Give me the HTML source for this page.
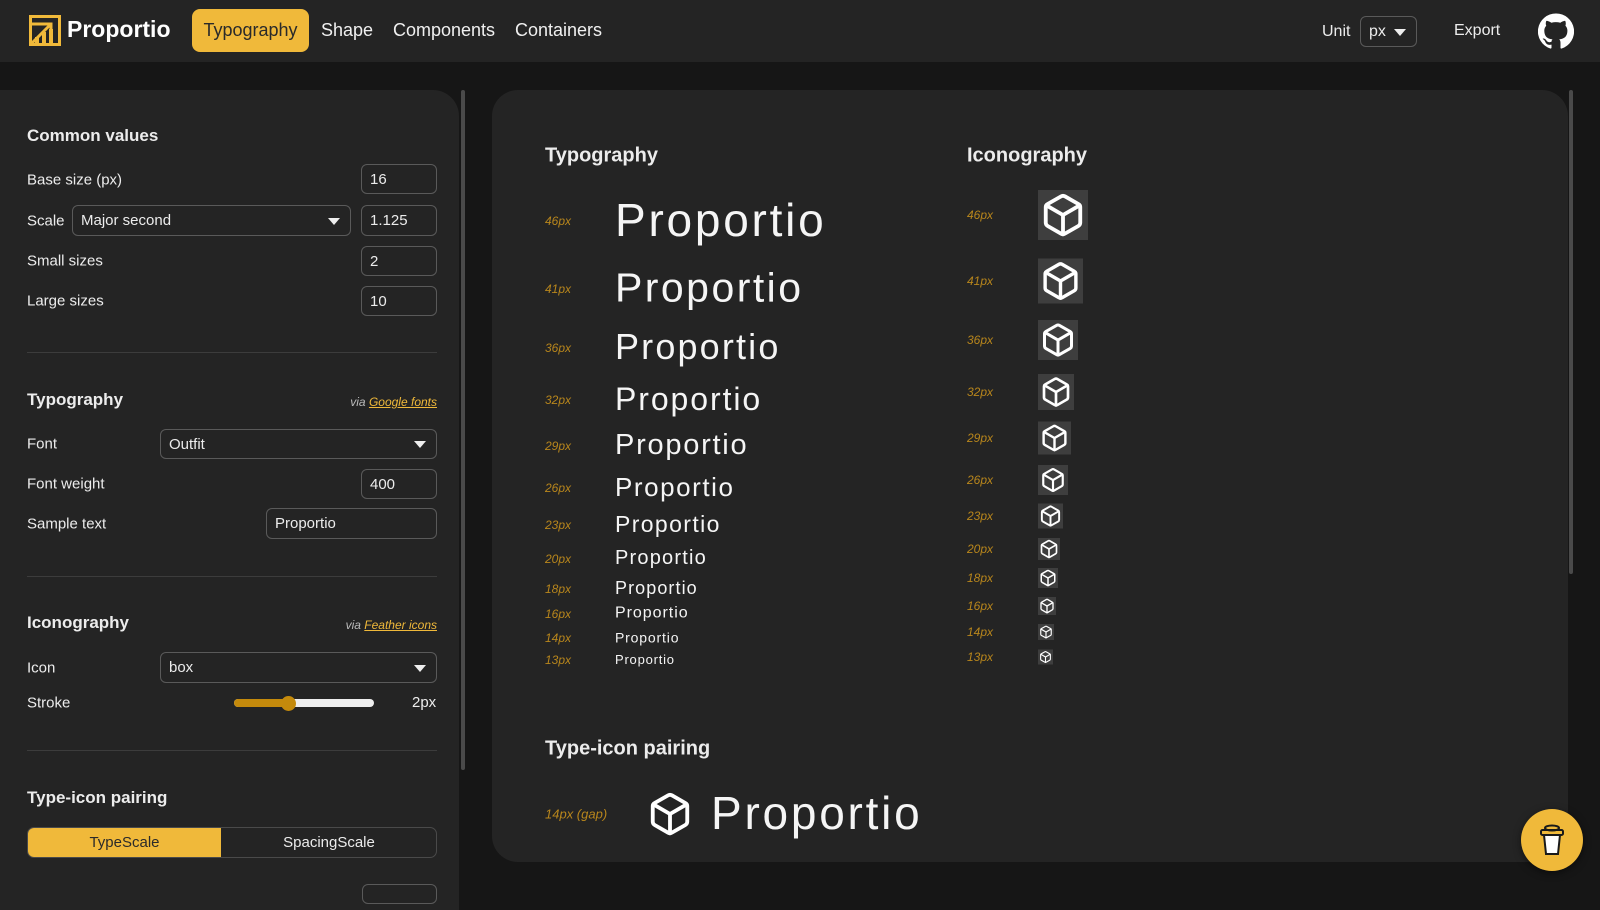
<!DOCTYPE html><html><head><meta charset="utf-8"><style>
*{box-sizing:border-box;margin:0;padding:0}
body{width:1600px;height:889px;overflow:hidden;background:#161616;font-family:"Liberation Sans",sans-serif;color:#ececec;position:relative}
.a{position:absolute;white-space:nowrap}
.hdr{left:0;top:0;width:1600px;height:62px;background:#242424}
.nav{font-size:18px;top:20px;color:#f0f0f0}
.side{left:0;top:90px;width:459px;height:820px;background:#242424;border-top-right-radius:26px}
.main{left:492px;top:90px;width:1076px;height:772px;background:#242424;border-radius:26px}
.lbl{font-size:15px;left:27px;transform:translateY(-50%)}
.h{font-size:17px;font-weight:bold;transform:translateY(-50%)}
.inp{border:1px solid #5a5a5a;border-radius:6px;font-size:15px;padding-left:8px;display:flex;align-items:center}
.dd::after{content:"";position:absolute;right:10px;top:50%;margin-top:-3px;border-left:6px solid transparent;border-right:6px solid transparent;border-top:7px solid #eee}
.div{left:27px;width:410px;height:1px;background:#3c3c3c}
.via{font-size:12px;font-style:italic;color:#bbb;right:1163px;transform:translateY(-50%)}
.via u{color:#f0b93a}
.sz{font-size:12px;font-style:italic;color:#b8861c;transform:translateY(-50%)}
.pt{left:615px;letter-spacing:.06em;transform:translateY(-52%);color:#f5f5f5}
.ic{left:1038px;background:#3e3e3e;transform:translateY(-50%);display:flex;align-items:center;justify-content:center}
</style></head><body>
<div class="a hdr"></div>
<svg class="a" style="left:29px;top:15px" width="32" height="31" viewBox="0 0 32 31"><rect x="1.5" y="1.5" width="29" height="28" fill="none" stroke="#f0b93a" stroke-width="3"/><path d="M1 9H22V17M3 28L22 9" stroke="#f0b93a" stroke-width="3" fill="none"/><rect x="6" y="22" width="4" height="7" fill="#f0b93a"/><rect x="13" y="17" width="4" height="12" fill="#f0b93a"/><rect x="20" y="14" width="4" height="15" fill="#f0b93a"/></svg>
<div class="a" style="left:67px;top:16px;font-size:23px;font-weight:bold;color:#fff">Proportio</div>
<div class="a" style="left:192px;top:9px;width:117px;height:43px;background:#f0b93a;border-radius:8px;color:#2a2a2a;font-size:18px;display:flex;align-items:center;justify-content:center">Typography</div>
<div class="a nav" style="left:321px">Shape</div>
<div class="a nav" style="left:393px">Components</div>
<div class="a nav" style="left:515px">Containers</div>
<div class="a" style="left:1322px;top:23px;font-size:16px">Unit</div>
<div class="a inp dd" style="left:1360px;top:16px;width:57px;height:31px;font-size:16px">px</div>
<div class="a" style="left:1454px;top:22px;font-size:16px">Export</div>
<svg class="a" style="left:1538px;top:13px" width="36" height="36" viewBox="0 0 24 24"><path fill="#fff" d="M12 .3a12 12 0 0 0-3.8 23.4c.6.1.8-.3.8-.6v-2c-3.3.7-4-1.6-4-1.6-.6-1.4-1.4-1.8-1.4-1.8-1-.7.1-.7.1-.7 1.2.1 1.8 1.2 1.8 1.2 1 1.8 2.8 1.3 3.5 1 0-.8.4-1.3.7-1.6-2.7-.3-5.5-1.3-5.5-6 0-1.2.5-2.3 1.3-3.1-.2-.4-.6-1.6 0-3.2 0 0 1-.3 3.4 1.2a11.5 11.5 0 0 1 6 0c2.3-1.5 3.3-1.2 3.3-1.2.6 1.6.2 2.8.1 3.2.8.8 1.3 1.9 1.3 3.2 0 4.6-2.8 5.6-5.5 5.9.5.4.9 1.1.9 2.2v3.3c0 .3.1.7.8.6A12 12 0 0 0 12 .3"/></svg>

<div class="a side"></div>
<div class="a" style="left:461px;top:90px;width:4px;height:680px;background:#4a4a4a;border-radius:2px"></div>
<div class="a h" style="left:27px;top:136px">Common values</div>
<div class="a lbl" style="top:180px">Base size (px)</div>
<div class="a inp" style="left:361px;top:164px;width:76px;height:30px">16</div>
<div class="a lbl" style="top:221px">Scale</div>
<div class="a inp dd" style="left:72px;top:205px;width:279px;height:31px">Major second</div>
<div class="a inp" style="left:361px;top:205px;width:76px;height:31px">1.125</div>
<div class="a lbl" style="top:261px">Small sizes</div>
<div class="a inp" style="left:361px;top:246px;width:76px;height:30px">2</div>
<div class="a lbl" style="top:301px">Large sizes</div>
<div class="a inp" style="left:361px;top:286px;width:76px;height:30px">10</div>
<div class="a div" style="top:352px"></div>
<div class="a h" style="left:27px;top:400px">Typography</div>
<div class="a via" style="top:402px">via <u>Google fonts</u></div>
<div class="a lbl" style="top:444px">Font</div>
<div class="a inp dd" style="left:160px;top:429px;width:277px;height:30px">Outfit</div>
<div class="a lbl" style="top:484px">Font weight</div>
<div class="a inp" style="left:361px;top:469px;width:76px;height:30px">400</div>
<div class="a lbl" style="top:524px">Sample text</div>
<div class="a inp" style="left:266px;top:508px;width:171px;height:31px">Proportio</div>
<div class="a div" style="top:576px"></div>
<div class="a h" style="left:27px;top:623px">Iconography</div>
<div class="a via" style="top:625px">via <u>Feather icons</u></div>
<div class="a lbl" style="top:668px">Icon</div>
<div class="a inp dd" style="left:160px;top:652px;width:277px;height:31px">box</div>
<div class="a lbl" style="top:703px">Stroke</div>
<div class="a" style="left:234px;top:699px;width:140px;height:8px;border-radius:4px;background:#eee"></div>
<div class="a" style="left:234px;top:699px;width:56px;height:8px;border-radius:4px;background:#c48a0c"></div>
<div class="a" style="left:281px;top:696px;width:15px;height:15px;border-radius:50%;background:#c48a0c"></div>
<div class="a" style="left:412px;top:694px;font-size:15px">2px</div>
<div class="a div" style="top:750px"></div>
<div class="a h" style="left:27px;top:798px">Type-icon pairing</div>
<div class="a" style="left:27px;top:827px;width:410px;height:31px;border:1px solid #4a4a4a;border-radius:7px;overflow:hidden;font-size:15px">
<div class="a" style="left:0;top:0;width:193px;height:29px;background:#f0b93a;color:#2a2a2a;display:flex;align-items:center;justify-content:center">TypeScale</div>
<div class="a" style="left:193px;top:0;width:216px;height:29px;display:flex;align-items:center;justify-content:center">SpacingScale</div></div>
<div class="a" style="left:362px;top:884px;width:75px;height:20px;border:1px solid #5a5a5a;border-radius:6px"></div>

<div class="a main"></div>
<div class="a" style="left:1569px;top:90px;width:4px;height:484px;background:#4a4a4a;border-radius:2px"></div>
<div class="a h" style="left:545px;top:156px;font-size:20px">Typography</div>
<div class="a h" style="left:967px;top:156px;font-size:20px">Iconography</div>

<svg width="0" height="0" style="position:absolute"><defs><g id="bx" fill="none" stroke="#fff" stroke-width="2" stroke-linecap="round" stroke-linejoin="round"><path d="M21 16V8a2 2 0 0 0-1-1.73l-7-4a2 2 0 0 0-2 0l-7 4A2 2 0 0 0 3 8v8a2 2 0 0 0 1 1.73l7 4a2 2 0 0 0 2 0l7-4A2 2 0 0 0 21 16z"/><polyline points="3.27 6.96 12 12.01 20.73 6.96"/><line x1="12" y1="22.08" x2="12" y2="12"/></g></defs></svg>

<div class="a sz" style="left:545px;top:221px">46px</div><div class="a pt" style="top:221px;font-size:46px">Proportio</div>
<div class="a sz" style="left:545px;top:289px">41px</div><div class="a pt" style="top:289px;font-size:41px">Proportio</div>
<div class="a sz" style="left:545px;top:348px">36px</div><div class="a pt" style="top:348px;font-size:36px">Proportio</div>
<div class="a sz" style="left:545px;top:400px">32px</div><div class="a pt" style="top:400px;font-size:32px">Proportio</div>
<div class="a sz" style="left:545px;top:446px">29px</div><div class="a pt" style="top:446px;font-size:29px">Proportio</div>
<div class="a sz" style="left:545px;top:488px">26px</div><div class="a pt" style="top:488px;font-size:26px">Proportio</div>
<div class="a sz" style="left:545px;top:525px">23px</div><div class="a pt" style="top:525px;font-size:23px">Proportio</div>
<div class="a sz" style="left:545px;top:559px">20px</div><div class="a pt" style="top:559px;font-size:20px">Proportio</div>
<div class="a sz" style="left:545px;top:589px">18px</div><div class="a pt" style="top:589px;font-size:18px">Proportio</div>
<div class="a sz" style="left:545px;top:614px">16px</div><div class="a pt" style="top:614px;font-size:16px">Proportio</div>
<div class="a sz" style="left:545px;top:638px">14px</div><div class="a pt" style="top:638px;font-size:14px">Proportio</div>
<div class="a sz" style="left:545px;top:660px">13px</div><div class="a pt" style="top:660px;font-size:13px">Proportio</div>

<div class="a sz" style="left:967px;top:215px">46px</div><div class="a ic" style="top:215px;width:50px;height:50px"><svg width="46" height="46" viewBox="0 0 24 24"><use href="#bx"/></svg></div>
<div class="a sz" style="left:967px;top:281px">41px</div><div class="a ic" style="top:281px;width:45px;height:45px"><svg width="41" height="41" viewBox="0 0 24 24"><use href="#bx"/></svg></div>
<div class="a sz" style="left:967px;top:340px">36px</div><div class="a ic" style="top:340px;width:40px;height:40px"><svg width="36" height="36" viewBox="0 0 24 24"><use href="#bx"/></svg></div>
<div class="a sz" style="left:967px;top:392px">32px</div><div class="a ic" style="top:392px;width:36px;height:36px"><svg width="32" height="32" viewBox="0 0 24 24"><use href="#bx"/></svg></div>
<div class="a sz" style="left:967px;top:438px">29px</div><div class="a ic" style="top:438px;width:33px;height:33px"><svg width="29" height="29" viewBox="0 0 24 24"><use href="#bx"/></svg></div>
<div class="a sz" style="left:967px;top:480px">26px</div><div class="a ic" style="top:480px;width:30px;height:30px"><svg width="26" height="26" viewBox="0 0 24 24"><use href="#bx"/></svg></div>
<div class="a sz" style="left:967px;top:516px">23px</div><div class="a ic" style="top:516px;width:25px;height:25px"><svg width="23" height="23" viewBox="0 0 24 24"><use href="#bx"/></svg></div>
<div class="a sz" style="left:967px;top:549px">20px</div><div class="a ic" style="top:549px;width:22px;height:22px"><svg width="20" height="20" viewBox="0 0 24 24"><use href="#bx"/></svg></div>
<div class="a sz" style="left:967px;top:578px">18px</div><div class="a ic" style="top:578px;width:20px;height:20px"><svg width="18" height="18" viewBox="0 0 24 24"><use href="#bx"/></svg></div>
<div class="a sz" style="left:967px;top:606px">16px</div><div class="a ic" style="top:606px;width:18px;height:18px"><svg width="16" height="16" viewBox="0 0 24 24"><use href="#bx"/></svg></div>
<div class="a sz" style="left:967px;top:632px">14px</div><div class="a ic" style="top:632px;width:16px;height:16px"><svg width="14" height="14" viewBox="0 0 24 24"><use href="#bx"/></svg></div>
<div class="a sz" style="left:967px;top:657px">13px</div><div class="a ic" style="top:657px;width:15px;height:15px"><svg width="13" height="13" viewBox="0 0 24 24"><use href="#bx"/></svg></div>

<div class="a h" style="left:545px;top:749px;font-size:20px">Type-icon pairing</div>
<div class="a sz" style="left:545px;top:814px;font-size:13px">14px (gap)</div>
<svg class="a" style="left:647px;top:791px" width="46" height="46" viewBox="0 0 24 24"><use href="#bx"/></svg>
<div class="a pt" style="left:711px;top:814px;font-size:46px">Proportio</div>

<div class="a" style="left:1521px;top:809px;width:62px;height:62px;border-radius:50%;background:#f0b93a;box-shadow:0 2px 8px rgba(0,0,0,.5)"></div>
<svg class="a" style="left:1536px;top:822px" width="32" height="36" viewBox="0 0 32 36"><ellipse cx="16" cy="6" rx="7" ry="2.5" fill="none" stroke="#1a1a1a" stroke-width="2"/><rect x="5" y="8" width="22" height="5" rx="1.5" fill="none" stroke="#1a1a1a" stroke-width="2"/><path d="M8 13L10 32H22L24 13Z" fill="#fff" stroke="#1a1a1a" stroke-width="2"/></svg>
</body></html>
